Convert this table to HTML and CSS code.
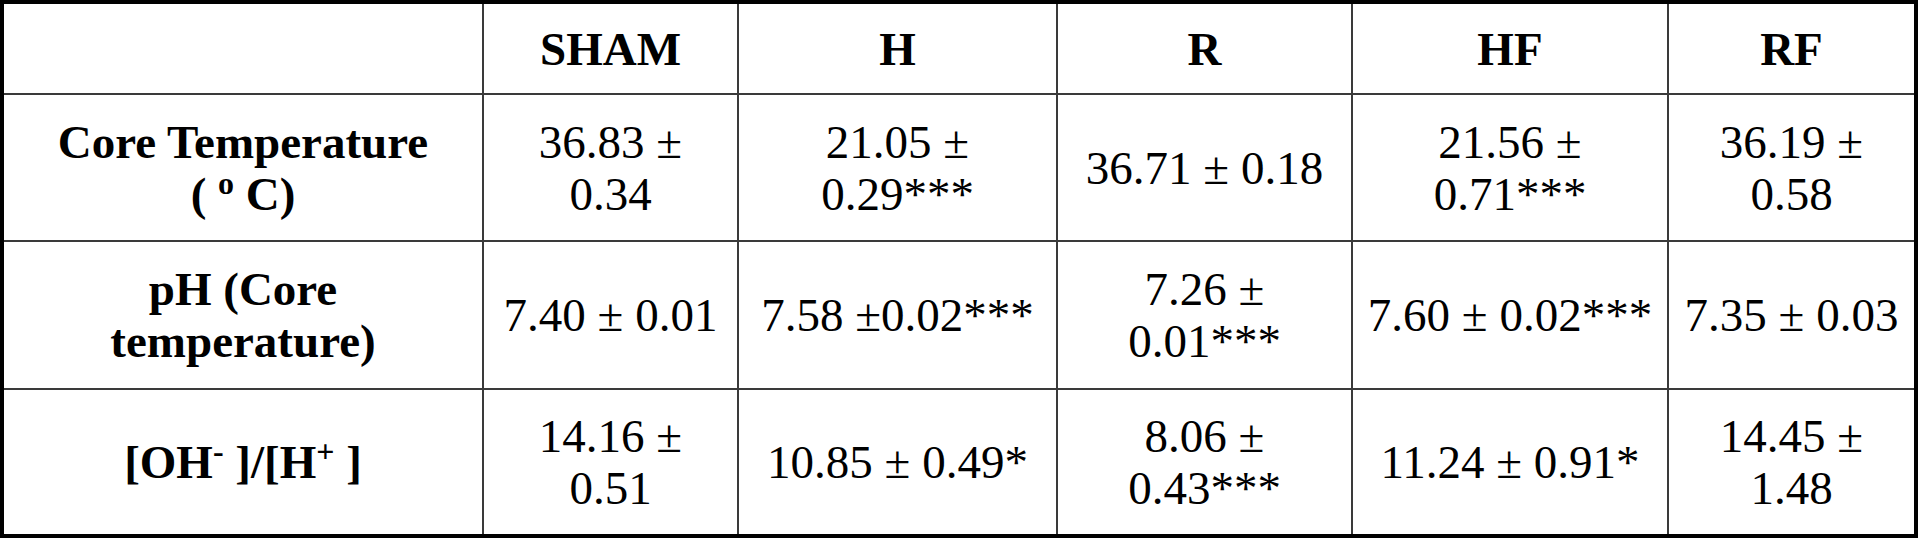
FILE: index.html
```html
<!DOCTYPE html>
<html>
<head>
<meta charset="utf-8">
<link rel="stylesheet" href="styles.css">
</head>
<body>
<table class="data">
  <colgroup>
    <col class="c-label"><col class="c-sham"><col class="c-h"><col class="c-r"><col class="c-hf"><col class="c-rf">
  </colgroup>
  <tr class="r-head">
    <th class="cell"></th><th class="cell">SHAM</th><th class="cell">H</th><th class="cell">R</th><th class="cell">HF</th><th class="cell">RF</th>
  </tr>
  <tr class="r1">
    <th class="cell">Core Temperature<br>( <sup class="sup">o</sup> C)</th>
    <td class="cell">36.83 ±<br>0.34</td>
    <td class="cell">21.05 ±<br>0.29***</td>
    <td class="cell">36.71 ± 0.18</td>
    <td class="cell">21.56 ±<br>0.71***</td>
    <td class="cell">36.19 ±<br>0.58</td>
  </tr>
  <tr class="r2">
    <th class="cell">pH (Core<br>temperature)</th>
    <td class="cell">7.40 ± 0.01</td>
    <td class="cell">7.58 ±0.02***</td>
    <td class="cell">7.26 ±<br>0.01***</td>
    <td class="cell">7.60 ± 0.02***</td>
    <td class="cell">7.35 ± 0.03</td>
  </tr>
  <tr class="r3">
    <th class="cell">[OH<sup class="sup">-</sup> ]/[H<sup class="sup">+</sup> ]</th>
    <td class="cell">14.16 ±<br>0.51</td>
    <td class="cell">10.85 ± 0.49*</td>
    <td class="cell">8.06 ±<br>0.43***</td>
    <td class="cell">11.24 ± 0.91*</td>
    <td class="cell">14.45 ±<br>1.48</td>
  </tr>
</table>
</body>
</html>
```
FILE: styles.css
```css
html, body {
  margin: 0;
  padding: 0;
  background: #ffffff;
}
.data {
  border-collapse: collapse;
  table-layout: fixed;
  width: 1918px;
  border: 4px solid #000;
  color: #000;
}
.c-label { width: 481px; }
.c-sham { width: 255px; }
.c-h { width: 319px; }
.c-r { width: 295px; }
.c-hf { width: 316px; }
.c-rf { width: 248px; }
.cell {
  font-family: "Liberation Serif", "Times New Roman", serif;
  font-size: 47px;
  line-height: 52px;
  border: 2px solid #3a3a3a;
  padding: 0;
  text-align: center;
  vertical-align: middle;
  font-weight: normal;
}
th.cell { font-weight: bold; }
.r-head { height: 92px; }
.r1 { height: 147px; }
.r2 { height: 148px; }
.r3 { height: 147px; }
.sup {
  font-size: 32px;
  line-height: 0;
  vertical-align: 16px;
}
```
